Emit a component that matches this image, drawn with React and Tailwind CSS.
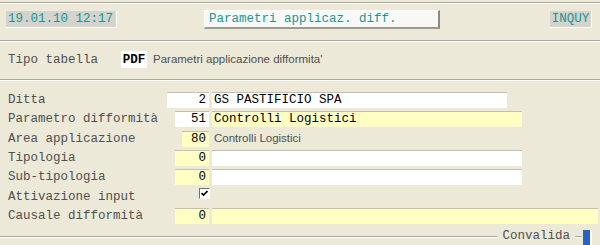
export default function App() {
  const mono = { fontFamily: '"Liberation Mono", "Courier New", monospace' };
  const sans = { fontFamily: '"Liberation Sans", Arial, sans-serif' };
  const rows = [
    { label: "Ditta", h: "h-[19px]", numW: "w-[42px]", num: "2", numBg: "bg-white", text: "GS PASTIFICIO SPA", textW: "w-[295px]", textBg: "bg-white" },
    { label: "Parametro difformità", h: "h-[20px]", numW: "w-[34px]", num: "51", numBg: "bg-white", text: "Controlli Logistici", textW: "w-[310px]", textBg: "bg-[#ffffc4]" },
    { label: "Area applicazione", h: "h-[19px]", numW: "w-[27px]", num: "80", numBg: "bg-[#ffffc4]", plain: "Controlli Logistici" },
    { label: "Tipologia", h: "h-[19px]", numW: "w-[34px]", num: "0", numBg: "bg-[#ffffc4]", text: "", textW: "w-[310px]", textBg: "bg-white" },
    { label: "Sub-tipologia", h: "h-[20px]", numW: "w-[34px]", num: "0", numBg: "bg-[#ffffc4]", text: "", textW: "w-[310px]", textBg: "bg-white" },
    { label: "Attivazione input", h: "h-[19px]", check: true },
    { label: "Causale difformità", h: "h-[19px]", numW: "w-[34px]", num: "0", numBg: "bg-[#ffffc4]", text: "", textW: "w-[386px]", textBg: "bg-[#ffffc4]" },
  ];
  return (
    <div className="w-[600px] h-[245px] bg-[#ece9d8] overflow-hidden flex flex-col" style={mono}>
      <div className="mt-[2px] h-[2px] border-t border-t-[#aca899] border-b border-b-white" />
      <div className="h-[37px] flex items-start pt-[7px] text-[12.5px] text-[#1c9494] whitespace-nowrap">
        <div className="ml-[6px] w-[111px] h-[17px] bg-[#d6d3cc] border-r border-b border-white flex items-center pl-[2px] leading-none">
          19.01.10 12:17
        </div>
        <div className="ml-[87px] -mt-[1px] w-[236px] h-[19px] bg-[#f8f8f6] border-t border-l border-white border-r-2 border-b-2 border-r-[#8a8a80] border-b-[#9a9a90] flex items-center pl-[4px] leading-none">
          Parametri applicaz. diff.
        </div>
        <div className="ml-[110px] w-[42px] h-[17px] bg-[#d6d3cc] border-r border-b border-white flex items-center justify-center leading-none">
          INQUY
        </div>
      </div>
      <div className="h-[2px] border-t border-t-[#aca899] border-b border-b-white" />
      <div className="h-[37px] flex items-start pt-[9px]">
        <div className="w-[121px] pl-[8px] h-[17px] flex items-center text-[12.5px] text-[#505050] leading-none whitespace-nowrap">Tipo tabella</div>
        <div className="w-[26px] h-[17px] bg-white flex items-center justify-center text-[12.5px] font-bold text-black leading-none">PDF</div>
        <div className="ml-[6px] h-[17px] flex items-center text-[11.5px] text-[#505050] leading-none whitespace-nowrap" style={sans}>
          Parametri applicazione difformita'
        </div>
      </div>
      <div className="h-[2px] border-t border-t-[#aca899] border-b border-b-white" />
      <div className="pt-[11px] flex flex-col">
        {rows.map((r) => (
          <div key={r.label} className={`${r.h} flex items-start`}>
            <div className="w-[160px] pl-[8px] h-[16px] flex items-center text-[12.5px] text-[#505050] leading-none whitespace-nowrap">{r.label}</div>
            <div className="w-[49px] flex justify-end">
              {r.check ? (
                <div className="mt-[-1px] mr-[-1px] w-[11px] h-[11px] bg-white border border-[#6f6f6f] border-r-white border-b-white flex items-center justify-center">
                  <svg width="7" height="7" viewBox="0 0 7 7">
                    <path d="M0.5 3 L2.5 5 L6.5 1" stroke="black" strokeWidth="1.6" fill="none" />
                  </svg>
                </div>
              ) : (
                <div className={`${r.numW} h-[16px] ${r.numBg} border-t border-t-[#c4c0b0] flex items-center justify-end pr-[3px] text-[12.5px] text-black leading-none`}>
                  {r.num}
                </div>
              )}
            </div>
            {r.plain && (
              <div className="ml-[5px] h-[16px] flex items-center text-[11.5px] text-[#505050] leading-none whitespace-nowrap" style={sans}>
                {r.plain}
              </div>
            )}
            {r.textW && (
              <div className={`ml-[3px] ${r.textW} h-[16px] ${r.textBg} border-t border-t-[#c4c0b0] flex items-center pl-[2px] text-[12.5px] text-black leading-none whitespace-pre`}>
                {r.text}
              </div>
            )}
          </div>
        ))}
      </div>
      <div className="mt-[1px] h-[17px] flex items-center">
        <div className="flex-1 h-[2px] border-t border-t-[#aca899] border-b border-b-white" />
        <div className="px-[5px] text-[12.5px] text-[#505050] leading-none">Convalida</div>
        <div className="w-[7px] h-[2px] border-t border-t-[#aca899] border-b border-b-white" />
        <div className="ml-[1px] mr-[8px] w-[9px] h-[17px] bg-[#2a62c6] border-r-2 border-r-white mt-[3px]" />
      </div>
    </div>
  );
}
